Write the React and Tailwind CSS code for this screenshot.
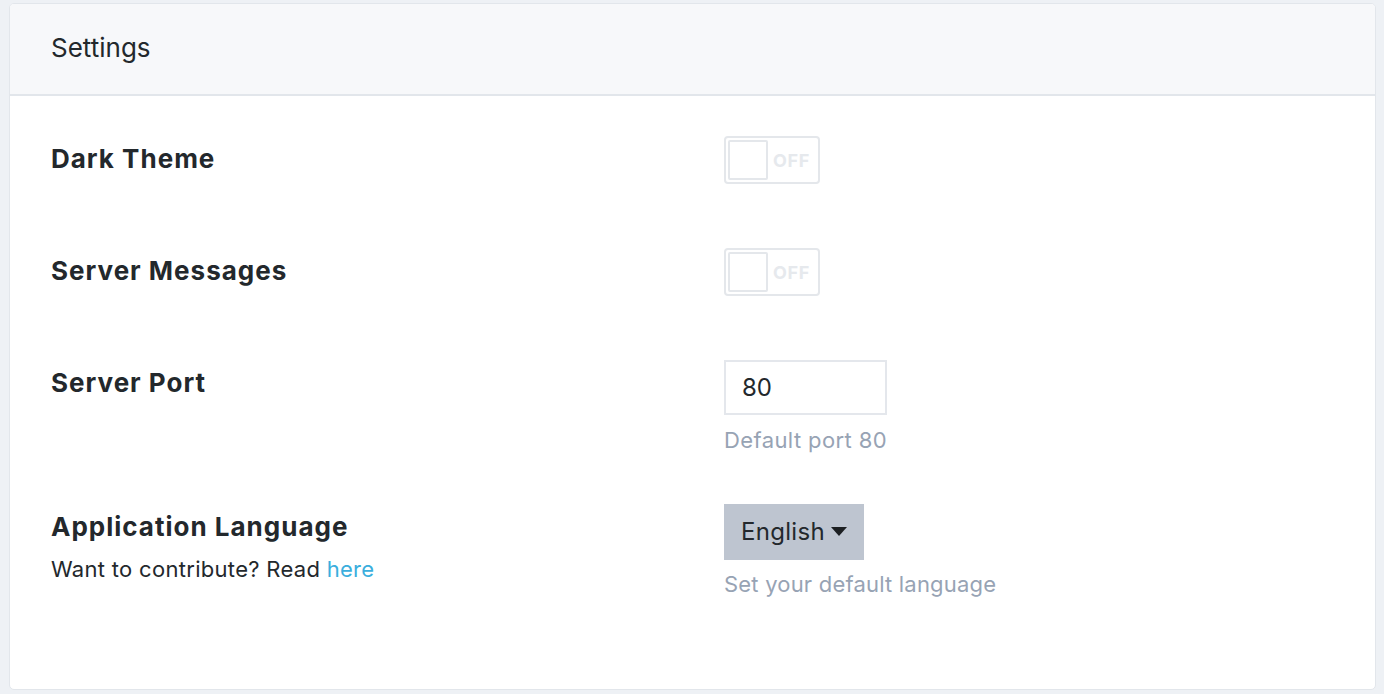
import React, { useState } from 'react';

// Settings card — toggles, port input and a language picker.
function Toggle({ on, onChange }) {
  return (
    <button
      type="button"
      onClick={() => onChange(!on)}
      className="relative flex h-[48px] w-[96px] items-center rounded-[4px] border-2 border-[#e4e7eb] bg-white p-[2px]"
    >
      <span className="h-[40px] w-[40px] rounded-[2px] border-2 border-[#e4e7eb] bg-white" />
      <span className="ml-[5px] text-[18px] font-bold tracking-[0.6px] text-[#e6e9ed]">
        {on ? 'ON' : 'OFF'}
      </span>
    </button>
  );
}

function Label({ children }) {
  return (
    <div className="mt-[7px] text-[26px] font-bold leading-[32px] tracking-[1px] text-[#23282c]">
      {children}
    </div>
  );
}

export default function App() {
  const [dark, setDark] = useState(false);
  const [messages, setMessages] = useState(false);
  const [port, setPort] = useState('80');

  return (
    <div
      className="h-[694px] bg-[#eef1f5] pt-[3px] pr-[8px] pb-[4px] pl-[9px]"
      style={{ fontFamily: 'Inter, "Noto Sans", sans-serif' }}
    >
      <div className="flex h-full flex-col overflow-hidden rounded-[5px] border border-[#e2e6eb] bg-white">
        <div className="flex h-[92px] items-center border-b-2 border-[#e2e6eb] bg-[#f7f8fa] pl-[41px] pb-[2px]">
          <h1 className="text-[26px] leading-[32px] text-[#23282c]">Settings</h1>
        </div>

        <div className="flex flex-col pt-[40px] pl-[41px]">
          <div className="flex h-[112px] items-start">
            <div className="w-[673px]"><Label>Dark Theme</Label></div>
            <Toggle on={dark} onChange={setDark} />
          </div>

          <div className="flex h-[112px] items-start">
            <div className="w-[673px]"><Label>Server Messages</Label></div>
            <Toggle on={messages} onChange={setMessages} />
          </div>

          <div className="flex h-[144px] items-start">
            <div className="w-[673px]"><Label>Server Port</Label></div>
            <div className="flex flex-col">
              <input
                value={port}
                onChange={(e) => setPort(e.target.value)}
                className="h-[55px] w-[163px] border-2 border-[#e4e7ec] px-[16px] text-[24px] text-[#23282c] outline-none"
              />
              <span className="mt-[10px] text-[22px] leading-[30px] tracking-[0.4px] text-[#97a3b4]">
                Default port 80
              </span>
            </div>
          </div>

          <div className="flex items-start">
            <div className="w-[673px]">
              <Label>Application Language</Label>
              <p className="mt-[11px] text-[22px] leading-[30px] tracking-[0.3px] text-[#23282c]">
                Want to contribute? Read <a href="#" className="text-[#3aaedd]">here</a>
              </p>
            </div>
            <div className="flex flex-col">
              <button
                type="button"
                className="flex h-[56px] w-[140px] items-center bg-[#bec5d0] pl-[17px] text-[24px] tracking-[0.3px] text-[#23282c]"
              >
                English
                <svg width="16" height="9" viewBox="0 0 16 9" className="ml-[6px] mb-[2px]">
                  <path d="M0 0h16L8 9z" fill="#1c1f22" />
                </svg>
              </button>
              <span className="mt-[9px] text-[22px] leading-[30px] tracking-[0.2px] text-[#97a3b4]">
                Set your default language
              </span>
            </div>
          </div>
        </div>
      </div>
    </div>
  );
}
